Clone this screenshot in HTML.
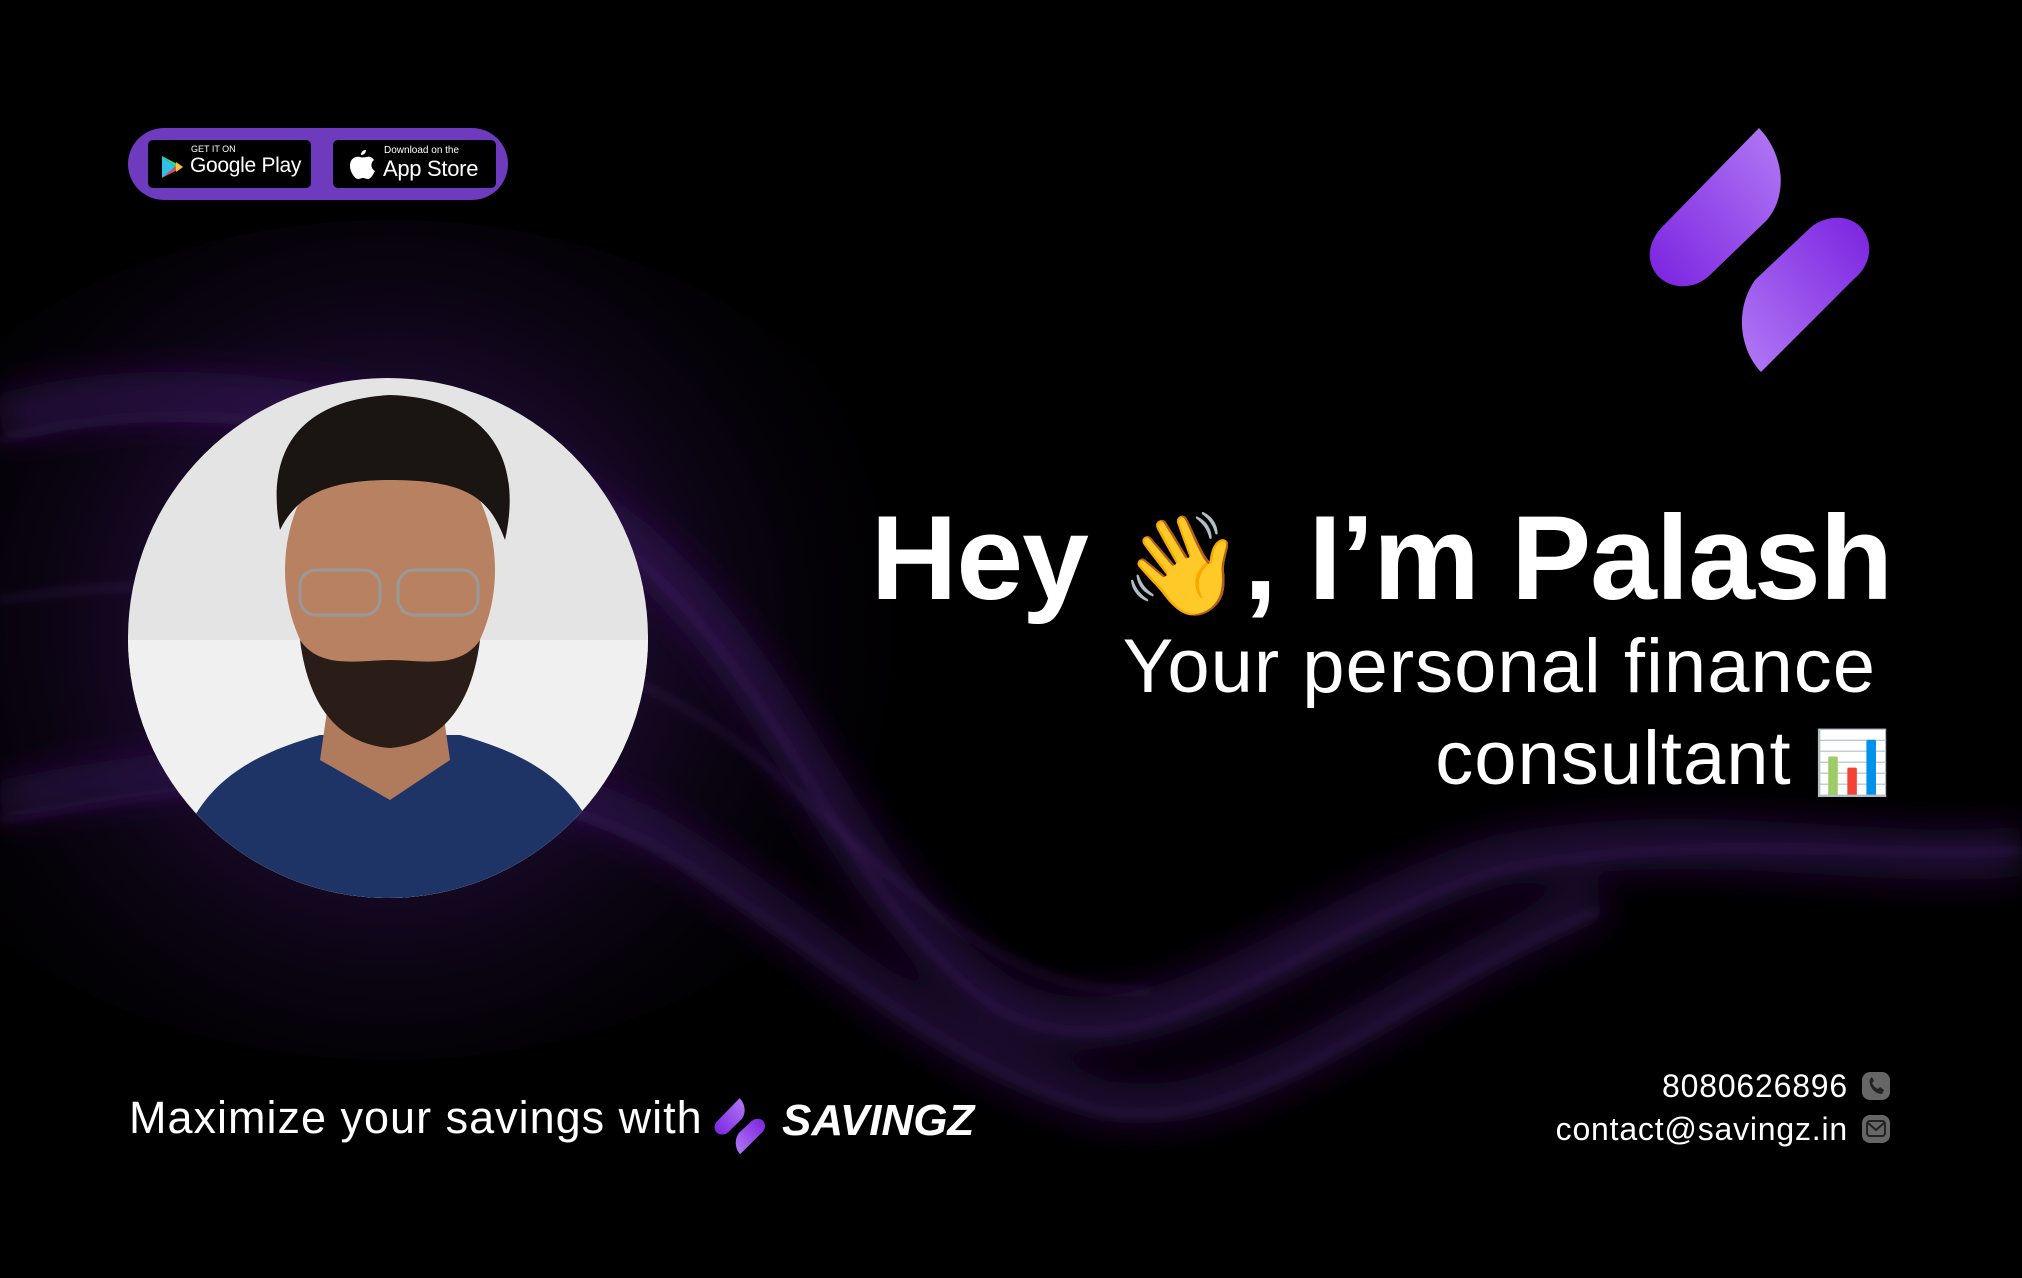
<!DOCTYPE html>
<html><head><meta charset="utf-8"><style>
html,body{margin:0;padding:0;background:#000;}
body{width:2022px;height:1278px;position:relative;overflow:hidden;font-family:"Liberation Sans","Noto Sans CJK SC",sans-serif;color:#fff;}
.abs{position:absolute;}
</style></head><body>
<svg class="abs" style="left:0;top:0" width="2022" height="1278" viewBox="0 0 2022 1278">
<defs>
<radialGradient id="glow" cx="390" cy="630" r="560" gradientUnits="userSpaceOnUse">
<stop offset="0" stop-color="#5a2a90" stop-opacity="0.75"/>
<stop offset="0.5" stop-color="#2a1045" stop-opacity="0.45"/>
<stop offset="1" stop-color="#000" stop-opacity="0"/>
</radialGradient>
<filter id="b1"><feGaussianBlur stdDeviation="18"/></filter>
<filter id="b2"><feGaussianBlur stdDeviation="5"/></filter>
<linearGradient id="lg" x1="0" y1="1" x2="1" y2="0"><stop offset="0" stop-color="#7a22e0"/><stop offset="1" stop-color="#b27af5"/></linearGradient>
<linearGradient id="lg2" x1="0" y1="1" x2="1" y2="0"><stop offset="0" stop-color="#b27af5"/><stop offset="1" stop-color="#7a22e0"/></linearGradient>
</defs>
<rect width="2022" height="1278" fill="#000"/>
<ellipse cx="390" cy="640" rx="560" ry="420" fill="url(#glow)"/>
<g filter="url(#b1)" fill="none" stroke="#3a1a60" stroke-opacity="0.55">
<path d="M0,420 C200,360 500,420 650,560 C800,700 850,900 1000,1000 C1150,1080 1300,920 1500,860 C1700,820 1900,870 2022,850" stroke-width="50"/>
<path d="M0,800 C200,760 500,720 700,860 C850,960 950,1060 1100,1100 C1250,1130 1400,980 1600,900" stroke-width="40"/>
</g>
<g filter="url(#b2)" fill="none" stroke="#6d3aa8" stroke-opacity="0.3" stroke-width="4">
<path d="M0,440 C220,380 520,440 660,580 C800,720 860,920 1000,1010 C1150,1090 1300,930 1500,870 C1700,830 1900,860 2022,850"/>
<path d="M0,820 C220,780 520,740 710,880 C860,980 960,1070 1100,1110 C1250,1140 1400,990 1600,910"/>
<path d="M0,600 C250,560 560,600 760,760 C900,880 1000,1000 1150,990"/>
</g>
<defs><clipPath id="cc"><circle cx="388" cy="638" r="260"/></clipPath></defs>
<g clip-path="url(#cc)">
<rect x="120" y="370" width="540" height="540" fill="#e4e4e4"/>
<rect x="120" y="640" width="540" height="270" fill="#f0f0f0"/>
<path d="M170,900 C180,800 230,760 320,735 L460,735 C550,760 600,800 610,900 Z" fill="#1e3466"/>
<path d="M330,690 L440,690 L450,760 L390,800 L320,760 Z" fill="#b07a5c"/>
<ellipse cx="390" cy="570" rx="105" ry="135" fill="#b88262"/>
<path d="M280,530 C265,450 300,400 390,395 C480,398 525,450 505,540 C490,500 470,480 390,480 C320,480 295,500 280,530 Z" fill="#1a1412"/>
<path d="M300,640 C310,720 350,745 390,748 C430,745 470,720 480,640 C460,670 420,660 390,660 C360,660 320,670 300,640 Z" fill="#2a1c17"/>
<rect x="300" y="570" width="80" height="45" rx="16" fill="none" stroke="#999" stroke-width="3"/>
<rect x="398" y="570" width="80" height="45" rx="16" fill="none" stroke="#999" stroke-width="3"/>
</g>
<g transform="translate(1630,110)">
<path d="M129,18 C152,42 160,82 137,110 L80,165 C65,180 40,180 27,165 C15,150 18,130 35,114 Z" fill="url(#lg)"/>
<path d="M131,262 C110,240 104,200 125,170 L180,118 C196,104 222,104 233,120 C244,136 240,156 224,169 Z" fill="url(#lg2)"/>
</g>
<g transform="translate(710,1094) scale(0.23)">
<path d="M129,18 C152,42 160,82 137,110 L80,165 C65,180 40,180 27,165 C15,150 18,130 35,114 Z" fill="url(#lg)"/>
<path d="M131,262 C110,240 104,200 125,170 L180,118 C196,104 222,104 233,120 C244,136 240,156 224,169 Z" fill="url(#lg2)"/>
</g>
<rect x="128" y="128" width="380" height="72" rx="36" fill="#6e3bbf"/>
<rect x="148" y="140" width="163" height="48" rx="5" fill="#000"/>
<rect x="333" y="140" width="163" height="48" rx="5" fill="#000"/>
<path d="M162,156 L162,178 L175,167 Z" fill="#2fc1e8"/>
<path d="M162,156 L183,167 L175,167 Z" fill="#3bd37a"/>
<path d="M162,178 L183,167 L175,167 Z" fill="#ea4b5a"/>
<path d="M183,167 L176,162 L176,172 Z" fill="#f7c33b"/>
<path d="M361,155 C364,155 366,153 366,150 C363,150 361,152 361,155 Z M360,157 C356,156 350,158 350,166 C350,172 355,179 358,179 C360,179 361,178 363,178 C365,178 366,179 368,179 C371,179 374,173 375,171 C371,169 370,163 374,160 C372,157 369,156 367,157 C364,157 363,158 360,157 Z" fill="#fff"/>
<rect x="1862" y="1072" width="28" height="28" rx="8" fill="#666"/>
<path d="M1870,1079 C1868,1085 1874,1094 1882,1094 L1884,1090 L1880,1087 L1878,1089 C1875,1088 1873,1085 1872,1083 L1874,1081 L1872,1077 Z" fill="#222"/>
<rect x="1862" y="1115" width="28" height="28" rx="8" fill="#666"/>
<rect x="1867" y="1121" width="18" height="15" rx="3" fill="none" stroke="#222" stroke-width="2"/>
<path d="M1868,1123 L1876,1130 L1884,1123" fill="none" stroke="#222" stroke-width="2"/>
</svg>
<div class="abs" style="left:191px;top:144px;font-size:9px;">GET IT ON</div>
<div class="abs" style="left:190px;top:154px;font-size:21px;letter-spacing:-0.3px;">Google Play</div>
<div class="abs" style="left:384px;top:145px;font-size:10px;">Download on the</div>
<div class="abs" style="left:383px;top:156px;font-size:22px;letter-spacing:-0.3px;">App Store</div>

<div class="abs" style="right:130px;top:488px;font-size:120px;font-weight:bold;white-space:nowrap;letter-spacing:-1px;line-height:140px;">Hey <span style="font-family:'Noto Color Emoji','DejaVu Sans',sans-serif;font-size:100px">👋</span>, I’m Palash</div>
<div class="abs" style="right:146px;top:622px;font-size:76px;white-space:nowrap;line-height:90px;letter-spacing:1px;">Your personal finance</div>
<div class="abs" style="right:130px;top:714px;font-size:76px;white-space:nowrap;line-height:90px;letter-spacing:1px;">consultant <span style="font-size:62px">📊</span></div>

<div class="abs" style="left:129px;top:1092px;font-size:45px;white-space:nowrap;letter-spacing:1px;">Maximize your savings with</div>
<div class="abs" style="left:782px;top:1096px;font-size:44px;font-weight:bold;font-style:italic;white-space:nowrap;">SAVINGZ</div>
<div class="abs" style="right:174px;top:1068px;font-size:32px;white-space:nowrap;letter-spacing:0.8px;">8080626896</div>
<div class="abs" style="right:174px;top:1111px;font-size:32px;white-space:nowrap;letter-spacing:0.8px;">contact@savingz.in</div>
</body></html>
